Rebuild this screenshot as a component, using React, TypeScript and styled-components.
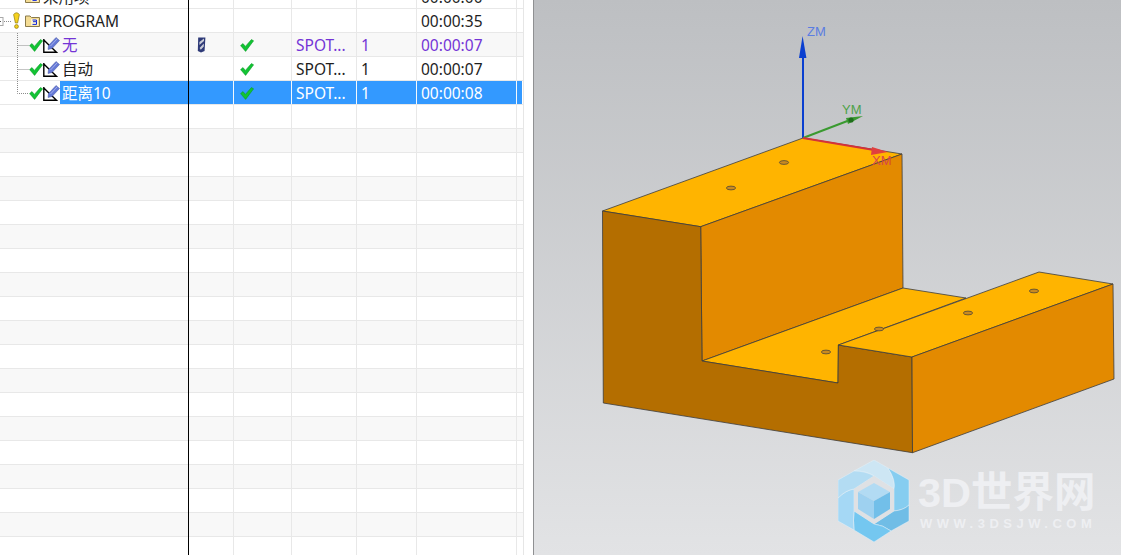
import React from "react";
import styled, { createGlobalStyle } from "styled-components";

const Global = createGlobalStyle`
  html, body { margin: 0; padding: 0; width: 100%; height: 100%; overflow: hidden; background: #fff; }
  #root { height: 100%; }
`;

const Page = styled.div`
  display: flex;
  width: 1121px;
  height: 555px;
  overflow: hidden;
  font-family: "Noto Sans", "Noto Sans CJK SC", sans-serif;
  font-size: 15.5px;
`;

const TreePanel = styled.div`
  position: relative;
  width: 523px;
  flex: none;
  overflow: hidden;
  background: #fff;

  &::after {
    content: "";
    position: absolute;
    left: 188px;
    top: 0;
    bottom: 0;
    width: 1px;
    background: #000;
  }
`;

const Gutter = styled.div`
  width: 10px;
  flex: none;
  background: #fff;
  border-left: 1px solid #e6e6e6;
  box-sizing: border-box;
`;

const Rows = styled.div`
  margin-top: -15px;
`;

const Row = styled.div<{ $tone: "plain" | "alt" | "selected"; $color?: string }>`
  display: grid;
  grid-template-columns: 189px 45px 58px 65px 60px 100px 5px;
  height: 24px;
  box-sizing: border-box;
  border-bottom: 1px solid #e8e8e8;
  background: ${(p) => (p.$tone === "alt" ? "#f8f8f8" : "#fff")};
  color: ${(p) => p.$color ?? "#1e1e1e"};
  line-height: 22px;
`;

const Cell = styled.div<{ $selected?: boolean }>`
  box-sizing: border-box;
  height: 23px;
  padding: 1px 0 0 4px;
  border-right: 1px solid #e8e8e8;
  white-space: nowrap;
  overflow: hidden;
  display: flex;
  align-items: center;
  ${(p) => p.$selected && "background:#3399ff;color:#fff;border-right-color:#f4f8fc;"}
`;

const EdgeCell = styled.div<{ $selected?: boolean }>`
  height: 23px;
  ${(p) => p.$selected && "background:#3399ff;"}
`;

const TreeCell = styled.div`
  height: 23px;
  display: flex;
  align-items: center;
  white-space: nowrap;
`;

const Glyphs = styled.span<{ $width: number }>`
  display: flex;
  align-items: center;
  flex: none;
  width: ${(p) => p.$width}px;
`;

const StatusIcons = styled.span`
  display: flex;
  align-items: center;
  flex: none;
  margin-top: 2px;
`;

const Label = styled.span<{ $selected?: boolean; $inset: number }>`
  flex: 1;
  align-self: stretch;
  padding: 1px 0 0 ${(p) => p.$inset}px;
  ${(p) => p.$selected && "background:#3399ff;color:#fff;"}
`;

const CheckCell = styled(Cell)`
  padding-left: 6px;
`;

const ToolCell = styled(Cell)`
  padding-left: 8px;
`;

const Viewport = styled.div`
  position: relative;
  flex: 1;
  height: 555px;
  overflow: hidden;
  background: linear-gradient(180deg, #bdbfc2 0%, #e2e3e5 100%);
  border-left: 1px solid #8f9092;
  box-sizing: border-box;
`;

const Scene = styled.svg`
  display: block;
`;

const AxisLabel = styled.text<{ $fill: string }>`
  font-family: "Liberation Sans", sans-serif;
  font-size: 13px;
  fill: ${(p) => p.$fill};
`;

const Watermark = styled.div`
  position: absolute;
  left: 304px;
  top: 460px;
  display: flex;
  gap: 8px;
  align-items: flex-start;
`;

const Brand = styled.div`
  display: flex;
  flex-direction: column;
  padding-top: 9px;
`;

const BrandName = styled.div`
  font-family: "Liberation Sans", "Noto Sans CJK SC", sans-serif;
  font-weight: 700;
  font-size: 41.5px;
  line-height: 47px;
  color: #eeeff2;
  white-space: nowrap;
`;

const BrandUrl = styled.div`
  font-family: "Liberation Sans", sans-serif;
  font-weight: 700;
  font-size: 13px;
  line-height: 15px;
  letter-spacing: 4.5px;
  margin-left: 2px;
  color: #eeeff2;
  white-space: nowrap;
`;

const Check = () => (
  <svg width="14" height="13" viewBox="0 0 14 13">
    <path d="M0.6 6.6 L3 4.6 L5.4 7.4 L11.4 0.6 L13.6 1.8 L5.6 12.4 Z" fill="#11c433" stroke="#0b9a28" strokeWidth="0.6" />
  </svg>
);

const OpIcon = () => (
  <svg width="17" height="17" viewBox="0 0 17 17">
    <path d="M0.8 2 V15.3 H13.5 L8.5 10.5 L0.8 3" fill="#fff" stroke="#000" strokeWidth="1.4" />
    <path d="M5.5 8.5 L13 0.5 L16.5 3.5 L9 11.5 L5 12.5 Z" fill="#6478d6" stroke="#46559f" strokeWidth="0.5" />
    <path d="M7.5 9 L14 2" stroke="#aab6ee" strokeWidth="0.9" />
  </svg>
);

const Connector = ({ last }: { last?: boolean }) => (
  <svg width="12" height="23" viewBox="0 0 12 23">
    <path d={last ? "M0.5 0 V12.5 H12" : "M0.5 0 V23 M0.5 12.5 H12"} stroke="#8b8b8b" strokeDasharray="1 1" fill="none" />
  </svg>
);

const Bulb = () => (
  <svg width="7" height="17" viewBox="0 0 7 17">
    <path d="M0.6 2.5 Q3.5 -1 6.4 2.5 L4.6 11 H2.4 Z" fill="#f5d21f" stroke="#8f7a10" strokeWidth="0.7" />
    <circle cx="3.5" cy="14.5" r="1.9" fill="#f5d21f" stroke="#8f7a10" strokeWidth="0.7" />
  </svg>
);

const Folder = () => (
  <svg width="15" height="13" viewBox="0 0 15 13">
    <path d="M0.5 2 H5 L6.5 3.5 H14.5 V12.5 H0.5 Z" fill="#f4dc94" stroke="#8a7a4a" />
    <rect x="6" y="5" width="7" height="6.5" fill="#fff6cf" />
    <path d="M7.5 6 H11.5 V7.7 H8 M11.5 7.7 V10.4 H7.5" fill="none" stroke="#1226d8" strokeWidth="1" />
  </svg>
);

const Expander = () => (
  <svg width="13" height="23" viewBox="0 0 13 23">
    <rect x="-5" y="8.5" width="8" height="8" fill="#fff" stroke="#a8a8a8" />
    <path d="M-3 12.5 H1" stroke="#555" />
    <path d="M4 12.5 H11" stroke="#8b8b8b" strokeDasharray="1 1" />
  </svg>
);

const ToolIcon = () => (
  <svg width="9" height="16" viewBox="0 0 9 16">
    <path d="M1.2 0.5 H8.4 L7.6 14 L4 15.5 L0.8 14 Z" fill="#2e3a78" />
    <path d="M2.4 5 L7 1.4 V4 L2.4 8 Z M2.6 11 L6.8 6.6 V9.4 L3.8 12.8 Z" fill="#c9ccd8" />
  </svg>
);

type Op = {
  name: string;
  tone: "alt" | "plain" | "selected";
  time: string;
  color?: string;
  tool?: boolean;
  last?: boolean;
};

const ops: Op[] = [
  { name: "无", tone: "alt", time: "00:00:07", color: "#7434d6", tool: true },
  { name: "自动", tone: "plain", time: "00:00:07" },
  { name: "距离10", tone: "selected", time: "00:00:08", last: true },
];

const emptyRows = Array.from({ length: 19 }, (_, i) => i);

const Empty = ({ tone }: { tone: "plain" | "alt" }) => (
  <Row $tone={tone}>
    <TreeCell />
    <Cell />
    <Cell />
    <Cell />
    <Cell />
    <Cell />
  </Row>
);

const Part = () => (
  <g stroke="#3c3c3c" strokeWidth="0.8" strokeLinejoin="round">
    <polygon points="803,138 902,154 700.7,226.7 602.5,211" fill="#ffb400" />
    <polygon points="700.7,226.7 902,154 903,288 702,361" fill="#e38a00" />
    <polygon points="702,361 903,288 966,298 838.4,345 838,383" fill="#ffb400" />
    <polygon points="602.5,211 700.7,226.7 702,361 838,383 838.4,345 912,357 912.5,452.7 603.3,403" fill="#b46e00" />
    <polygon points="838.4,345 1039,272 1113,284 912,357" fill="#ffb400" />
    <polygon points="912,357 1113,284 1114,379 912.5,452.7" fill="#e38a00" />
    {[
      [731, 188],
      [784, 162.5],
      [826, 352],
      [879, 329],
      [968, 313],
      [1034, 291],
    ].map(([cx, cy]) => (
      <ellipse key={cx} cx={cx} cy={cy} rx="4.6" ry="1.9" fill="#c98a20" strokeWidth="0.7" />
    ))}
  </g>
);

const Axes = () => (
  <g>
    <path d="M803 138 V52" stroke="#0a3fd0" strokeWidth="2" />
    <polygon points="802.6,36 806.4,58 799,58" fill="#0a3fd0" />
    <path d="M803 138 L850 120" stroke="#3a9a30" strokeWidth="2" />
    <polygon points="863,116 848,124 846,118" fill="#3a9a30" />
    <circle cx="851" cy="120" r="2.6" fill="#1f6e1c" />
    <path d="M803 138 L880 151" stroke="#d4323a" strokeWidth="2" />
    <polygon points="888,152 871,155 872,147" fill="#e0403f" />
    <AxisLabel $fill="#5a7de2" x="807" y="36">ZM</AxisLabel>
    <AxisLabel $fill="#4ea24a" x="842" y="114">YM</AxisLabel>
    <AxisLabel $fill="#d9464a" x="872" y="165">XM</AxisLabel>
  </g>
);

const Logo = () => (
  <svg width="72" height="82" viewBox="0 0 72 82">
    <g stroke="#e4f1f8" strokeWidth="0.5">
      <path d="M16 11 L36 0 L50 8 Q58 20 56 29 L36 16 Q28 11 16 11 Z" fill="#cde6f4" />
      <path d="M50 8 L71 20 V45 Q66 50 56 51 V29 Q58 20 50 8 Z" fill="#86cdf0" />
      <path d="M71 45 V61 L53 71 Q45 65 36 64 L56 51 Q66 50 71 45 Z" fill="#70bde6" />
      <path d="M53 71 L36 82 L16 70 Q15 60 16 51 L36 64 Q45 65 53 71 Z" fill="#74c7f0" />
      <path d="M16 70 L0 61 V38 Q8 30 16 29 V51 Q15 60 16 70 Z" fill="#a5d8f5" />
      <path d="M0 38 V20 L16 11 Q28 11 36 16 L16 29 Q8 30 0 38 Z" fill="#b3dcf3" />
    </g>
    <polygon points="36,16 56,29 56,51 36,64 16,51 16,29" fill="#dfe1e4" />
    <polygon points="36,23 52,32 36,41 20,32" fill="#b2dbf3" />
    <polygon points="20,32 36,41 36,59 20,49" fill="#9ed1f0" />
    <polygon points="52,32 36,41 36,59 52,49" fill="#72bfe9" />
  </svg>
);

export default function App() {
  return (
    <Page>
      <Global />
      <TreePanel>
        <Rows>
          <Row $tone="plain">
            <TreeCell>
              <Glyphs $width={25} />
              <Folder />
              <Label $inset={3}>未用项</Label>
            </TreeCell>
            <Cell />
            <Cell />
            <Cell />
            <Cell />
            <Cell>00:00:00</Cell>
          </Row>
          <Row $tone="plain">
            <TreeCell>
              <Expander />
              <Glyphs $width={12}>
                <Bulb />
              </Glyphs>
              <Folder />
              <Label $inset={3}>PROGRAM</Label>
            </TreeCell>
            <Cell />
            <Cell />
            <Cell />
            <Cell />
            <Cell>00:00:35</Cell>
          </Row>
          {ops.map((op) => {
            const selected = op.tone === "selected";
            return (
              <Row key={op.name} $tone={op.tone} $color={op.color}>
                <TreeCell>
                  <Glyphs $width={17} />
                  <Connector last={op.last} />
                  <StatusIcons>
                    <Check />
                    <OpIcon />
                  </StatusIcons>
                  <Label $selected={selected} $inset={2}>
                    {op.name}
                  </Label>
                </TreeCell>
                <ToolCell $selected={selected}>{op.tool && <ToolIcon />}</ToolCell>
                <CheckCell $selected={selected}>
                  <Check />
                </CheckCell>
                <Cell $selected={selected}>SPOT...</Cell>
                <Cell $selected={selected}>1</Cell>
                <Cell $selected={selected}>{op.time}</Cell>
                <EdgeCell $selected={selected} />
              </Row>
            );
          })}
          {emptyRows.map((i) => (
            <Empty key={i} tone={i % 2 === 1 ? "alt" : "plain"} />
          ))}
        </Rows>
      </TreePanel>
      <Gutter />
      <Viewport>
        <Scene width="587" height="555" viewBox="534 0 587 555">
          <Part />
          <Axes />
        </Scene>
        <Watermark>
          <Logo />
          <Brand>
            <BrandName>3D世界网</BrandName>
            <BrandUrl>WWW.3DSJW.COM</BrandUrl>
          </Brand>
        </Watermark>
      </Viewport>
    </Page>
  );
}
